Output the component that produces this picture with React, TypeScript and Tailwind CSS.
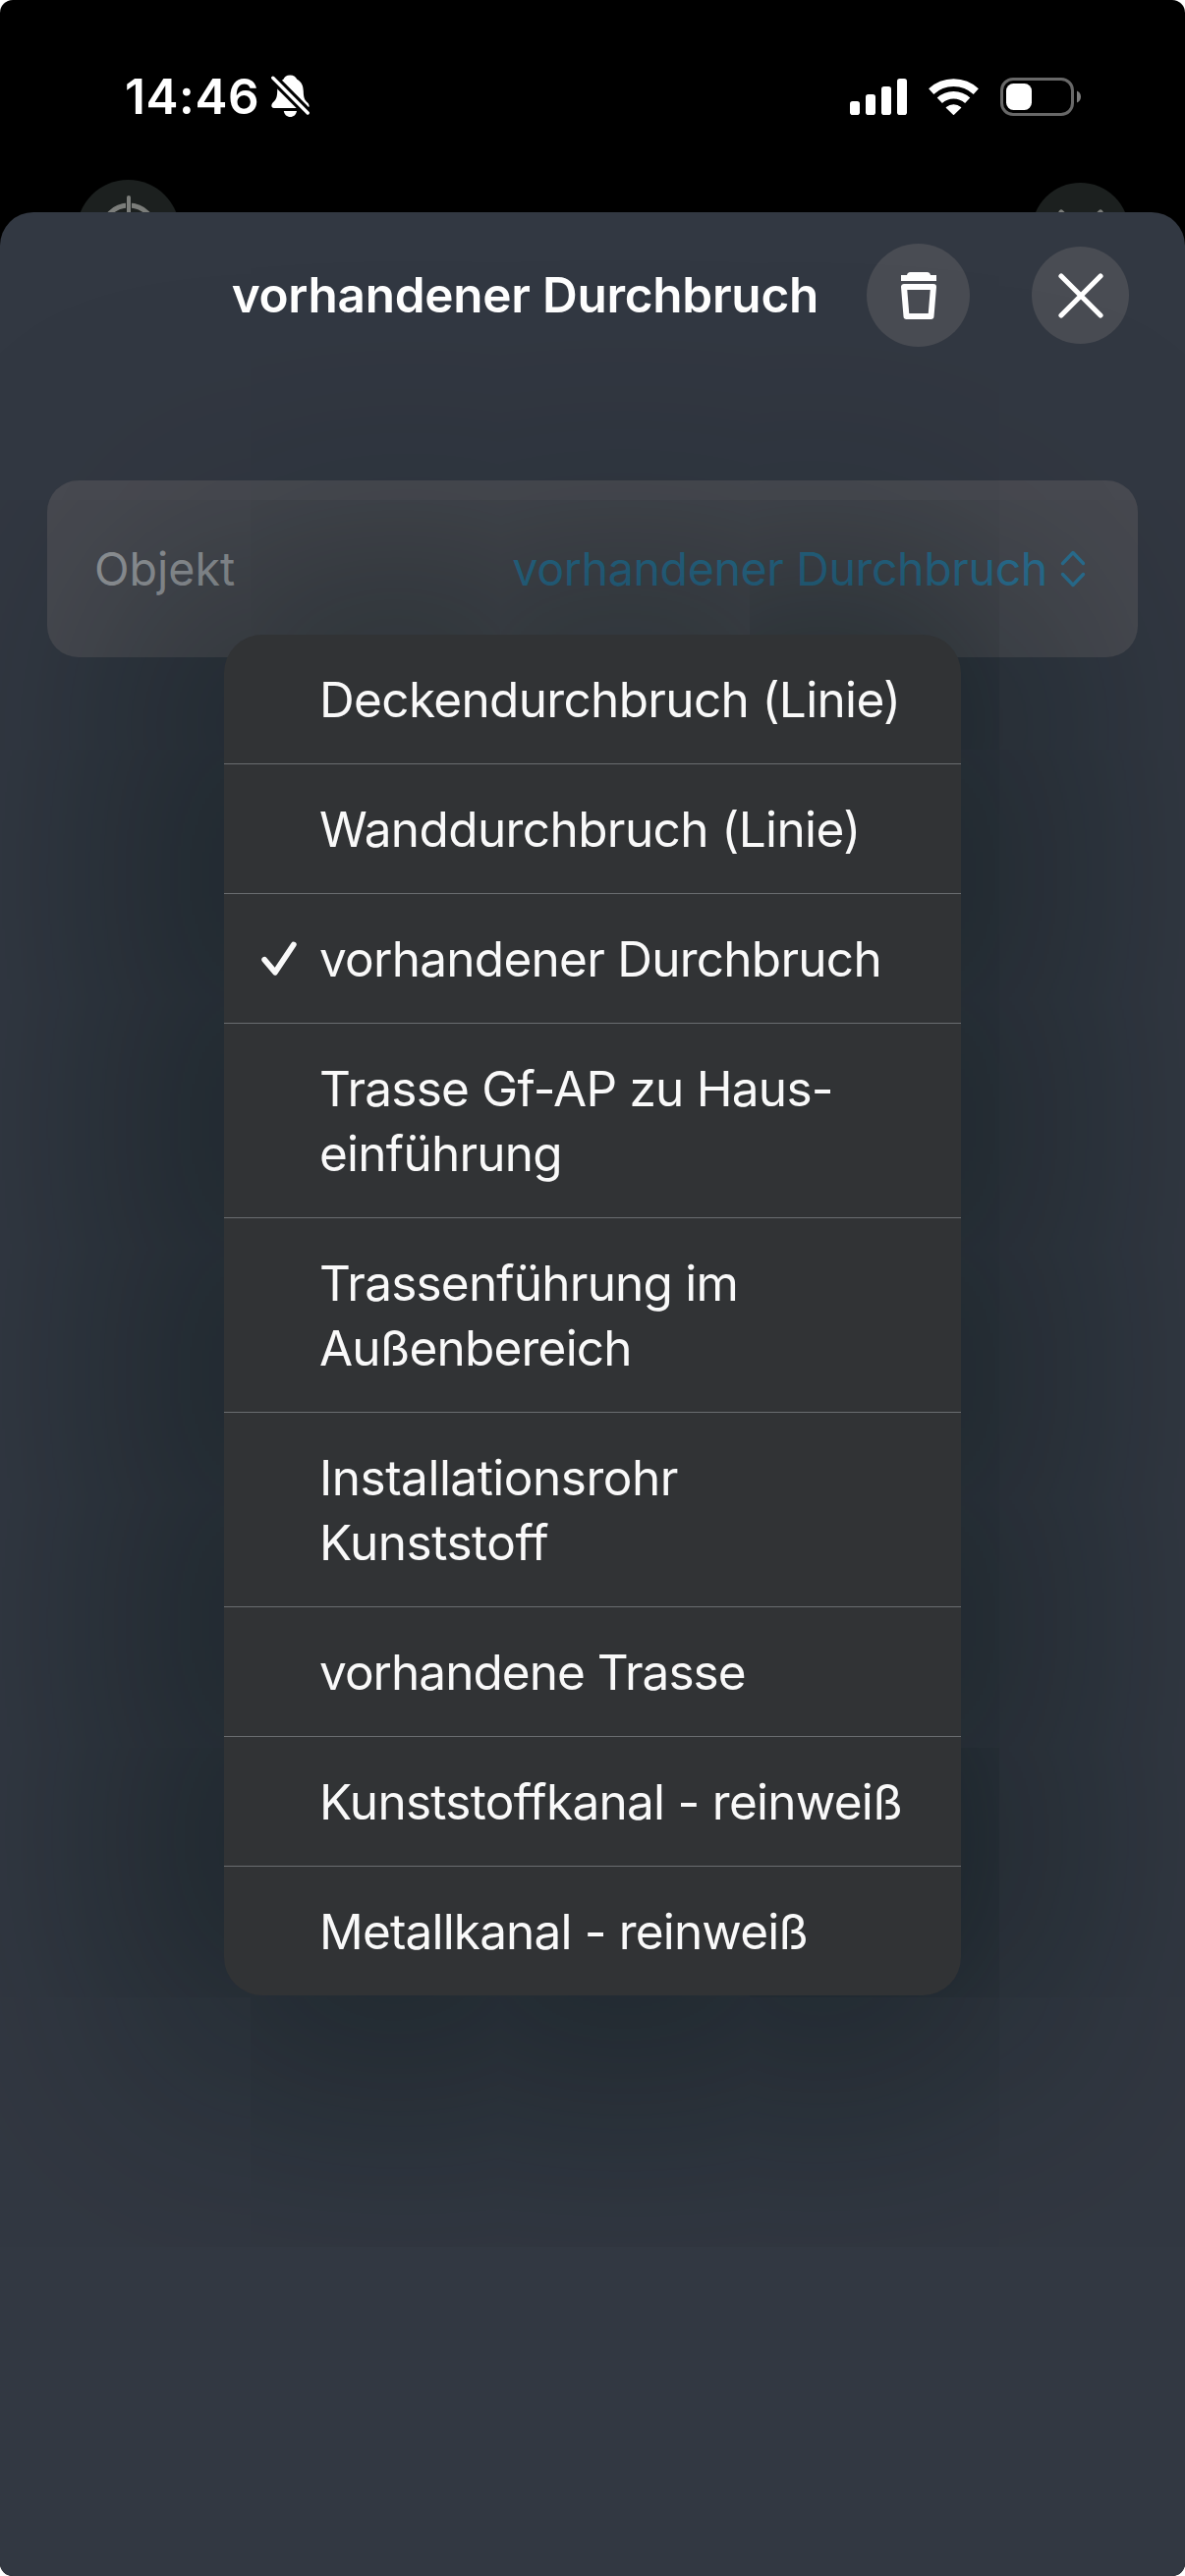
import { Fragment } from 'react';
import clsx from 'clsx';

interface MenuItem {
  lines: string[];
  tracking: string;
  checked?: boolean;
}

const menuItems: MenuItem[] = [
  { lines: ['Deckendurchbruch (Linie)'], tracking: 'tracking-[-0.66px]' },
  { lines: ['Wanddurchbruch (Linie)'], tracking: 'tracking-[-0.6px]' },
  { lines: ['vorhandener Durchbruch'], tracking: 'tracking-[-0.74px]', checked: true },
  { lines: ['Trasse Gf-AP zu Haus-', 'einführung'], tracking: 'tracking-[-0.75px]' },
  { lines: ['Trassenführung im', 'Außenbereich'], tracking: 'tracking-[-0.8px]' },
  { lines: ['Installationsrohr', 'Kunststoff'], tracking: 'tracking-[-0.5px]' },
  { lines: ['vorhandene Trasse'], tracking: 'tracking-[-0.97px]' },
  { lines: ['Kunststoffkanal - reinweiß'], tracking: 'tracking-[-0.72px]' },
  { lines: ['Metallkanal - reinweiß'], tracking: 'tracking-[-0.83px]' }
];

const BellOffIcon = () => (
  <svg width="40" height="44" viewBox="0 0 40 44" fill="#fff">
    <path d="M19.3.4c3.700 0 6 2.100 7 4.400 4.700 2.400 6.300 6.700 6.500 12.200.2 7 1.200 8.500 4.200 11.500 2.500 2.500 2 5.500-1 5.500H3c-3 0-3.500-3-1.400-5.500C4.600 25.500 6 24 6.200 17 6.400 11 8 7 12.400 4.800 13.200 2.300 15.500.4 19.300.4Z" />
    <path d="M12.800 37h13.200c-.6 3.800-3.200 6-6.600 6s-6-2.200-6.600-6Z" />
    <path d="M1.800 3.200 37.200 39" stroke="#000" strokeWidth="9.500" />
    <path d="M1.800 3.200 37.200 39" stroke="#fff" strokeWidth="3.400" strokeLinecap="round" />
  </svg>
);

const SignalIcon = () => (
  <svg width="58" height="37" viewBox="0 0 58 37" fill="#fff">
    <rect x="0" y="23" width="10" height="14" rx="2.800" />
    <rect x="16" y="16" width="10" height="21" rx="2.800" />
    <rect x="32" y="8" width="10" height="29" rx="2.800" />
    <rect x="48" y="0" width="10" height="37" rx="2.800" />
  </svg>
);

const WifiIcon = () => (
  <svg width="51" height="37" viewBox="0 0 51 37" fill="none" stroke="#fff" strokeWidth="7.600">
    <path d="M2.700 13.100A33.400 33.400 0 0 1 48.300 13.100" />
    <path d="M11.300 22.300A20.800 20.800 0 0 1 39.700 22.300" />
    <path
      d="M18.500 29.500A11 11 0 0 1 32.500 29.500L25.500 36.200Z"
      fill="#fff"
      strokeWidth="1.500"
      strokeLinejoin="round"
    />
  </svg>
);

const BatteryIcon = () => (
  <svg width="82" height="39" viewBox="0 0 82 39" fill="none">
    <rect x="1.500" y="1.500" width="72" height="36" rx="11.500" stroke="#686868" strokeWidth="3" />
    <rect x="6" y="6" width="26" height="27" rx="7.500" fill="#fff" />
    <path d="M78 13.500c2.500 1 4 3.200 4 6s-1.500 5-4 6Z" fill="#7c7c7c" />
  </svg>
);

const CrosshairIcon = () => (
  <svg width="74" height="74" viewBox="0 0 74 74" fill="none" stroke="#7b7d7a">
    <circle cx="37" cy="37" r="27" strokeWidth="5" />
    <path d="M37 0v24" stroke="#1c201f" strokeWidth="6" />
    <path d="M37 2v20" strokeWidth="4" strokeLinecap="round" />
  </svg>
);

const CloseIcon = ({ color }: { color: string }) => (
  <svg width="46" height="46" viewBox="0 0 46 46" fill="none" stroke={color} strokeWidth="5.200" strokeLinecap="round">
    <path d="M3 3l40 40M43 3 3 43" />
  </svg>
);

const TrashIcon = () => (
  <svg width="36" height="48" viewBox="0 0 36 48" fill="#fff">
    <path d="M6 3.500C6 1.500 7.500 0 9.500 0h17C28.500 0 30 1.500 30 3.500Z" />
    <path d="M0 3h36v6H0Z" />
    <path d="M3 15h30l-2.500 30h-25Z" fill="none" stroke="#fff" strokeWidth="6" strokeLinejoin="round" />
  </svg>
);

const UpDownIcon = () => (
  <svg width="26" height="38" viewBox="0 0 26 38" fill="none" stroke="#2b7194" strokeWidth="3.400" strokeLinecap="round" strokeLinejoin="round">
    <path d="M2.500 13.500 13 2.500l10.500 11M2.500 24.500 13 35.500l10.500-11" />
  </svg>
);

const CheckIcon = () => (
  <svg width="36" height="36" viewBox="0 0 36 36" fill="none" stroke="#f9f9f9" strokeWidth="5.800" strokeLinecap="round" strokeLinejoin="round">
    <path d="M3.200 18.800 14 31.700 32.800 3.500" />
  </svg>
);

const StatusBar = () => (
  <div className="flex h-[66px] items-center justify-between pl-[127px] pr-[106px]">
    <div className="flex items-center gap-3">
      <span className="text-[49.5px] font-semibold leading-[66px] tracking-[0.6px] text-white">14:46</span>
      <BellOffIcon />
    </div>
    <div className="flex items-center gap-[22px]">
      <SignalIcon />
      <WifiIcon />
      <BatteryIcon />
    </div>
  </div>
);

const OptionMenu = () => (
  <ul className="absolute left-[180px] top-[157px] w-[750px] rounded-[39px] bg-[#313335] shadow-[0_0_320px_75px_rgba(6,18,20,0.56)]">
    {menuItems.map((item, i) => (
      <li
        key={item.lines[0]}
        className={clsx(
          'flex pb-8 pt-[33px] text-[49.5px] leading-[66px] text-[#f9f9f9]',
          item.tracking,
          i < menuItems.length - 1 && 'border-b border-[#6a6d70]'
        )}
      >
        <div className="flex h-[66px] w-[97px] shrink-0 items-center pl-[38px]">
          {item.checked && <CheckIcon />}
        </div>
        <span className="whitespace-nowrap">
          {item.lines.map((line, n) => (
            <Fragment key={line}>
              {n > 0 && <br />}
              {line}
            </Fragment>
          ))}
        </span>
      </li>
    ))}
  </ul>
);

const App = () => {
  return (
    <div className="w-[1206px] bg-white font-['Inter',sans-serif]">
      <div className="flex h-[2622px] flex-col overflow-hidden rounded-[13px] bg-black">
        <div className="h-[216px] shrink-0 pt-[65px]">
          <StatusBar />
          {/* Toolbar of the view behind the sheet */}
          <div className="mt-[52px] flex h-[66px] items-start justify-between pl-[78px] pr-[57px]">
            <div className="flex size-[105px] shrink-0 items-center justify-center rounded-full bg-[#1c201f]">
              <CrosshairIcon />
            </div>
            <div className="mt-[3px] flex size-[99px] shrink-0 items-center justify-center rounded-full bg-[#1c201f]">
              <CloseIcon color="#7b7d7a" />
            </div>
          </div>
        </div>

        <div className="relative flex-1 overflow-hidden rounded-t-[34px] bg-[#323842]">
          <header className="flex items-center justify-end pr-[57px] pt-8">
            <h1 className="mb-[2px] mr-[49px] whitespace-nowrap text-[49.5px] font-semibold leading-[66px] tracking-[-0.27px] text-white">
              vorhandener Durchbruch
            </h1>
            <button className="flex size-[105px] items-center justify-center rounded-full bg-[#494c53]" aria-label="Löschen">
              <TrashIcon />
            </button>
            <button className="ml-[63px] flex size-[99px] items-center justify-center rounded-full bg-[#494c53]" aria-label="Schließen">
              <CloseIcon color="#fff" />
            </button>
          </header>

          <div className="relative mx-12 mt-[136px]">
            <div className="flex h-[180px] items-center justify-between rounded-[32px] bg-[#484a51] pl-12 pr-[53px] text-[46.5px]">
              <span className="pt-[2px] text-[#94979b]">Objekt</span>
              <div className="flex items-center gap-[13px]">
                <span className="pt-[2px] tracking-[-0.36px] text-[#2b7194]">vorhandener Durchbruch</span>
                <UpDownIcon />
              </div>
            </div>
            <OptionMenu />
          </div>
        </div>
      </div>
    </div>
  );
};

export default App;
